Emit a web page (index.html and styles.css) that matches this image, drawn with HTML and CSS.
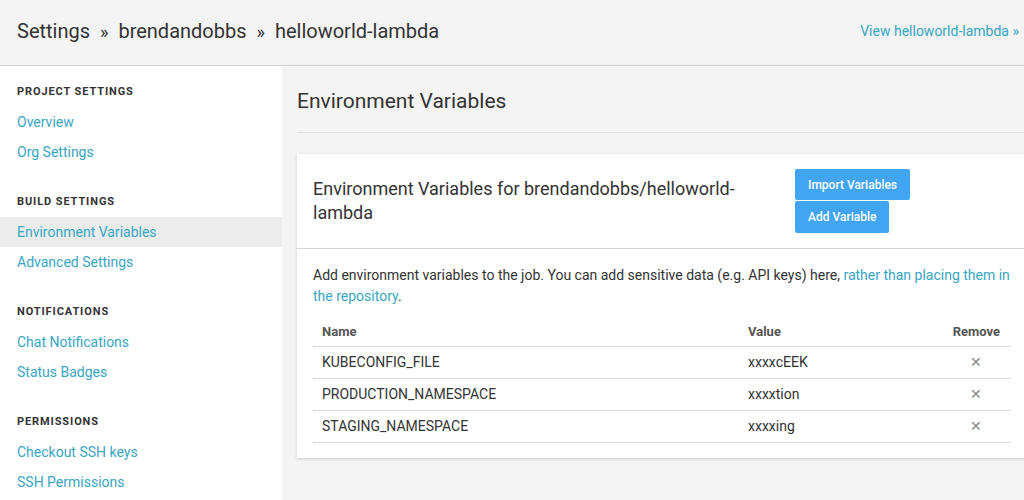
FILE: index.html
```html
<!DOCTYPE html>
<html>
<head>
<meta charset="utf-8">
<link rel="stylesheet" href="styles.css">
</head>
<body>
<header class="topbar">
  <h1 class="crumbs">Settings <span class="sep">»</span> brendandobbs <span class="sep">»</span> helloworld-lambda</h1>
  <a class="view-link" href="#">View helloworld-lambda »</a>
</header>
<div class="layout">
  <nav class="sidebar">
    <div class="group">
      <div class="group-title">Project Settings</div>
      <a class="nav-link" href="#">Overview</a>
      <a class="nav-link" href="#">Org Settings</a>
    </div>
    <div class="group">
      <div class="group-title">Build Settings</div>
      <a class="nav-link active" href="#">Environment Variables</a>
      <a class="nav-link" href="#">Advanced Settings</a>
    </div>
    <div class="group">
      <div class="group-title">Notifications</div>
      <a class="nav-link" href="#">Chat Notifications</a>
      <a class="nav-link" href="#">Status Badges</a>
    </div>
    <div class="group">
      <div class="group-title">Permissions</div>
      <a class="nav-link" href="#">Checkout SSH keys</a>
      <a class="nav-link" href="#">SSH Permissions</a>
    </div>
  </nav>
  <main class="main">
    <div class="content">
      <h2 class="page-title">Environment Variables</h2>
      <section class="card">
        <div class="card-head">
          <h3 class="card-title">Environment Variables for brendandobbs/helloworld-lambda</h3>
          <div class="actions">
            <button class="btn">Import Variables</button>
            <button class="btn">Add Variable</button>
          </div>
        </div>
        <div class="card-body">
          <p class="intro">Add environment variables to the job. You can add sensitive data (e.g. API keys) here, <a href="#">rather than placing them in the repository</a>.</p>
          <table class="vars">
            <thead>
              <tr><th class="c-name">Name</th><th class="c-value">Value</th><th class="c-remove">Remove</th></tr>
            </thead>
            <tbody>
              <tr><td class="c-name">KUBECONFIG_FILE</td><td class="c-value">xxxxcEEK</td><td class="c-remove"><span class="x">✕</span></td></tr>
              <tr><td class="c-name">PRODUCTION_NAMESPACE</td><td class="c-value">xxxxtion</td><td class="c-remove"><span class="x">✕</span></td></tr>
              <tr><td class="c-name">STAGING_NAMESPACE</td><td class="c-value">xxxxing</td><td class="c-remove"><span class="x">✕</span></td></tr>
            </tbody>
          </table>
        </div>
      </section>
    </div>
  </main>
</div>
</body>
</html>
```

FILE: styles.css
```css
* { box-sizing: border-box; }
html, body { margin: 0; padding: 0; }
body {
  font-family: Roboto, "Liberation Sans", Arial, sans-serif;
  color: #333;
  background: #f4f4f4;
  width: 1024px;
  height: 500px;
  overflow: hidden;
}
a { color: #39a6c2; text-decoration: none; }

.topbar {
  height: 66px;
  background: #f4f4f4;
  border-bottom: 1px solid #cfcfcf;
  display: flex;
  align-items: center;
  justify-content: space-between;
  padding: 0 5px 0 17px;
}
.crumbs {
  margin: 0;
  font-size: 20px;
  font-weight: 400;
  color: #333;
  padding-bottom: 4px;
}
.crumbs .sep { margin: 0 5px; font-size: 18px; }
.view-link { font-size: 14px; padding-bottom: 4px; }

.layout { display: flex; height: 434px; }
.sidebar {
  width: 282px;
  flex: none;
  background: #fff;
  padding-top: 12px;
}
.group { display: flex; flex-direction: column; margin-bottom: 20px; }
.group-title {
  height: 30px;
  line-height: 30px;
  padding-left: 17px;
  font-size: 11px;
  font-weight: 700;
  letter-spacing: 0.9px;
  text-transform: uppercase;
  color: #333;
}
.nav-link {
  height: 30px;
  line-height: 30px;
  padding-left: 17px;
  font-size: 14px;
}
.group:first-child .group-title { margin-top: -1px; }
.nav-link.active { background: #ececec; }

.main { flex: 1; padding-left: 15px; overflow: visible; }
.content { width: 729px; }
.page-title {
  margin: 0;
  height: 67px;
  line-height: 70px;
  font-size: 21px;
  font-weight: 400;
  color: #333;
  border-bottom: 1px solid #e0e0e0;
}
.card {
  margin-top: 21px;
  background: #fff;
  box-shadow: 0 1px 3px rgba(0,0,0,0.18);
}
.card-head {
  display: flex;
  padding: 15px 16px 15px 16px;
  border-bottom: 1px solid #d6d6d6;
}
.card-title {
  margin: 0;
  width: 482px;
  padding-right: 40px;
  padding-top: 8px;
  font-size: 18px;
  line-height: 24px;
  font-weight: 400;
  color: #333;
}
.actions { display: flex; flex-direction: column; align-items: flex-start; gap: 1px; }
.btn {
  border: 0;
  border-radius: 2px;
  background: #42a5f1;
  color: #fff;
  font-family: inherit;
  font-size: 12px;
  font-weight: 500;
  height: 31px;
  padding: 0 13px;
  cursor: pointer;
}
.btn + .btn { height: 32px; }

.card-body { padding: 16px 14px 15px 16px; }
.intro {
  margin: 0 0 11px;
  font-size: 14px;
  line-height: 21px;
  color: #333;
}
.vars { width: 697px; border-collapse: collapse; font-size: 14px; }
.vars th {
  text-align: left;
  font-size: 13px;
  font-weight: 700;
  color: #555;
  height: 28px;
  padding: 0 9px 1px;
  border-bottom: 1px solid #d3d3d3;
}
.vars td {
  height: 32px;
  padding: 0 9px;
  border-bottom: 1px solid #d3d3d3;
  color: #333;
}
.vars .c-value { width: 194px; padding-left: 2px; }
.vars .c-remove { width: 70px; text-align: center; }
.vars th.c-remove { text-align: right; padding-right: 10px; }
.x { color: #888; font-size: 14px; padding-left: 2px; }
```
